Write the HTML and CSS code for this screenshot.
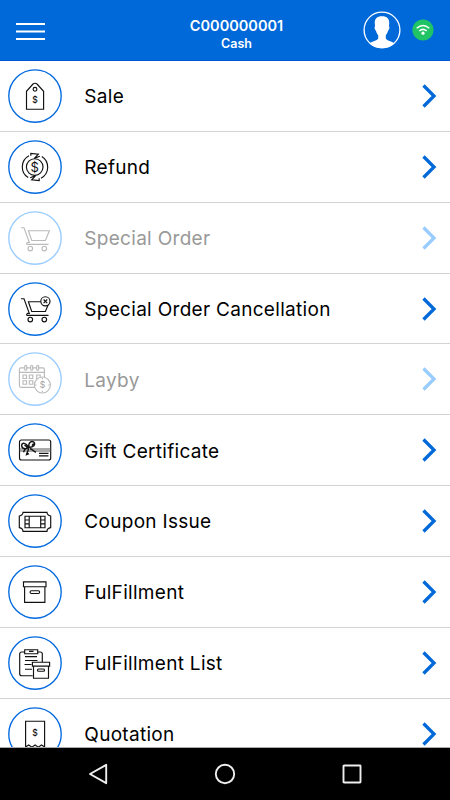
FILE: index.html
```html
<!DOCTYPE html>
<html lang="en">
<head>
<meta charset="utf-8">
<title>Menu</title>
<link rel="stylesheet" href="styles.css">
</head>
<body>
<svg class="defs" width="0" height="0">
  <symbol id="chevron" viewBox="0 0 16 26"><path d="M2.500 2.500 13 13 2.500 23.500" fill="none" stroke="currentColor" stroke-width="3.3"/></symbol>
  <symbol id="cart" viewBox="0 0 54 54"><path d="M13 16.7h3l5.3 14.6h-1.6q-1.7 1-.7 2.1h21.5M20.4 19.7h21l-4 9.8H23.7z"/><circle cx="22.3" cy="37.5" r="2.3"/><circle cx="36.3" cy="37.5" r="2.3"/></symbol>
</svg>
<div class="app">
  <header class="header">
    <svg class="burger" viewBox="0 0 29 20"><path d="M0 2h29M0 9.5h29M0 17h29" stroke="#fff" stroke-width="2"/></svg>
    <div class="title"><div class="code">C000000001</div><div class="mode">Cash</div></div>
    <div class="status">
      <svg class="avatar" viewBox="0 0 38 38"><circle cx="19" cy="19" r="17.9" fill="none" stroke="#fff" stroke-width="1.3"/><path d="M19 5.2c-5.200 0-7.600 2.600-7.200 7.500l.3 2.600c-1 .6-.4 3.800.8 4.200.5 2.300 1.300 3.600 2.300 4.700v3.300c-1.200 2.500-6 2.400-8.800 5A17.600 17.600 0 0 0 19 37a17.600 17.600 0 0 0 12.600-4.500c-2.800-2.600-7.600-2.500-8.800-5v-3.300c1-1.100 1.800-2.400 2.300-4.700 1.200-.4 1.800-3.600.8-4.200l.3-2.600c.4-4.900-2-7.500-7.200-7.500z" fill="#fff"/></svg>
      <svg class="wifi" viewBox="0 0 22 22"><circle cx="11" cy="11" r="10.6" fill="#20c464"/><g fill="none" stroke="#fff" stroke-width="1.5"><path d="M4.700 9.300q6.300-5.500 12.600 0M7.300 12q3.700-3.200 7.400 0"/></g><circle cx="11" cy="14.200" r="1.600" fill="#fff"/></svg>
    </div>
  </header>
  <main class="list">
    <div class="row"><svg class="icon" viewBox="0 0 54 54"><circle class="ring" cx="27" cy="27" r="26.2"/><path d="M18.5 40.2V22.3L25 15q2-1.5 4 0l6.6 7.3v17.9z"/><circle cx="27" cy="20.3" r="1.9"/><text x="27" y="33.500">$</text></svg><span class="label">Sale</span><svg class="chev"><use href="#chevron"/></svg></div>
    <div class="row"><svg class="icon" viewBox="0 0 54 54"><circle class="ring" cx="27" cy="27" r="26.2"/><circle cx="26.700" cy="27" r="8.3"/><path d="M21 15.8A12.6 12.6 0 0 0 20.2 37.6M33 38.2A12.6 12.6 0 0 0 33.8 16.4M22.8 15.700v-2.200l7.500.7-4 4.200 5.500-2.200M31.2 38.300v2.200l-7.500-.7 4-4.200-5.500 2.200"/><text class="large" x="26.700" y="31.600">$</text></svg><span class="label">Refund</span><svg class="chev"><use href="#chevron"/></svg></div>
    <div class="row off"><svg class="icon" viewBox="0 0 54 54"><circle class="ring" cx="27" cy="27" r="26.2"/><use href="#cart"/></svg><span class="label">Special Order</span><svg class="chev"><use href="#chevron"/></svg></div>
    <div class="row"><svg class="icon" viewBox="0 0 54 54"><circle class="ring" cx="27" cy="27" r="26.2"/><use href="#cart"/><circle class="cover" cx="37.4" cy="19.3" r="4.6"/><path d="m35.6 17.5 3.6 3.6m0-3.6-3.6 3.6"/></svg><span class="label">Special Order Cancellation</span><svg class="chev"><use href="#chevron"/></svg></div>
    <div class="row off"><svg class="icon" viewBox="0 0 54 54"><circle class="ring" cx="27" cy="27" r="26.2"/><rect x="11.4" y="15.8" width="25" height="19.5" rx="1.5"/><path d="M11.4 20.4h25M15 23h3.5v3.5H15zM21.3 23h3.5v3.5h-3.5zM28.7 23h3.5v3.5h-3.5zM15 28.7h3.5v3.5H15zM21.3 28.7h3.5v3.5h-3.5z"/><rect class="cover" x="16.7" y="13.2" width="2" height="5" rx="1"/><rect class="cover" x="22.7" y="13.2" width="2" height="5" rx="1"/><rect class="cover" x="28.7" y="13.2" width="2" height="5" rx="1"/><circle class="cover" cx="34.4" cy="33" r="8"/><path d="M34.4 25.7v1.5M34.4 38.8v1.5M27 33h1.5M40.2 33h1.5"/><text x="34.4" y="36.3">$</text></svg><span class="label">Layby</span><svg class="chev"><use href="#chevron"/></svg></div>
    <div class="row"><svg class="icon" viewBox="0 0 54 54"><circle class="ring" cx="27" cy="27" r="26.2"/><rect x="11.5" y="17" width="31.2" height="20" rx="2"/><path class="band" d="M11.500 26h31.200M11.500 28h31.200"/><path d="M31 30.300h9.500M31 32.800h9.500"/><path class="bow" d="M20.500 24.200c-2.500-4.500-6.500-5-6.800-2-.2 3.500 4 4.500 6.800 2zm.5 0c-1-4.500 2.500-7 5-5 2 3-1.500 5.500-5 5zm-1 .5c-1.500 0-3.500 2-4.500 4.500m5-4c0 3-1.500 4-2 6.500l2.500-1m1-5c2.500 0 3.500 3 6 3.500m-11.500-7 3 2m6-3.500-1.500 2"/></svg><span class="label">Gift Certificate</span><svg class="chev"><use href="#chevron"/></svg></div>
    <div class="row"><svg class="icon" viewBox="0 0 54 54"><circle class="ring" cx="27" cy="27" r="26.2"/><path d="M15 18.3h24q0 3 3.700 3.700v11.600q-3.700.6-3.700 3.700H15q0-3.100-3.700-3.700V22q3.700-.7 3.700-3.700zM17 22.200h20v11.500H17zM21.200 22.200v11.500M32.700 22.200v11.500M17 26h4.200M17 29.800h4.200M32.700 26H37M32.700 29.800H37"/></svg><span class="label">Coupon Issue</span><svg class="chev"><use href="#chevron"/></svg></div>
    <div class="row"><svg class="icon" viewBox="0 0 54 54"><circle class="ring" cx="27" cy="27" r="26.2"/><path d="M15.500 16.800h22.500v4.900H15.500zM16.600 21.700h20.300v15.700H16.600z"/><rect x="22.100" y="25.700" width="9.500" height="2.800" rx="1.200"/></svg><span class="label">FulFillment</span><svg class="chev"><use href="#chevron"/></svg></div>
    <div class="row"><svg class="icon" viewBox="0 0 54 54"><circle class="ring" cx="27" cy="27" r="26.2"/><path d="M16.700 16h-3q-2 0-2 2v19.700q0 2 2 2h11M29.700 16h2.600q2 0 2 2v8M17 20.600h12M17 24.500h12.500M16.500 28.500h7M17 33.200h7M16.700 13.700h13V17.700h-13zM21 15.300h4.500"/><path class="cover" d="M24.400 26.200h17.200v3.900H24.400zM25.500 30.100h15v12.100h-15z"/><rect x="29.500" y="33" width="7" height="2.200" rx="1"/></svg><span class="label">FulFillment List</span><svg class="chev"><use href="#chevron"/></svg></div>
    <div class="row"><svg class="icon" viewBox="0 0 54 54"><circle class="ring" cx="27" cy="27" r="26.2"/><path d="M17.600 40V14.200h19V40l-3.100-2-3.200 2.200-3.200-2.200-3.200 2.200-3.200-2.200z"/><text x="27" y="28.800">$</text></svg><span class="label">Quotation</span><svg class="chev"><use href="#chevron"/></svg></div>
  </main>
  <nav class="nav">
    <svg viewBox="0 0 24 24"><path d="M20.200 2.800v18.400L4 12z"/></svg>
    <svg viewBox="0 0 24 24"><circle cx="12" cy="12" r="9.200"/></svg>
    <svg viewBox="0 0 24 24"><rect x="3.500" y="3.500" width="17" height="17" rx=".5"/></svg>
  </nav>
</div>
</body>
</html>
```
FILE: styles.css
```css
* { box-sizing: border-box; }
body { margin: 0; font-family: Inter, sans-serif; background: #fff; color: #000; }
.defs { display: none; }
.app { width: 450px; height: 800px; display: flex; flex-direction: column; overflow: hidden; }
.header { flex: none; height: 61px; padding: 0 17px 0 16px; background: #0069d9; border-bottom: 1px solid #0055d4; color: #fff; display: grid; grid-template-columns: 80px 1fr 80px; align-items: center; }
.burger { width: 29px; height: 20px; margin-top: 3px; }
.title { text-align: center; padding-top: 7px; padding-left: 24px; }
.code { font-size: 14.5px; line-height: 19px; font-weight: 600; }
.mode { font-size: 12.5px; line-height: 17px; font-weight: 600; }
.status { display: flex; align-items: center; gap: 11px; margin-left: 9.5px; }
.avatar { width: 38px; height: 38px; flex: none; }
.wifi { width: 22px; height: 22px; flex: none; }
.list { flex: 1; min-height: 0; overflow: hidden; border-bottom: 1px solid #aaa; }
.row { height: 70.86px; padding: 0 13px 0 8px; border-bottom: 1px solid #d3d3d3; display: flex; align-items: center; }
.icon { width: 54px; height: 54px; flex: none; fill: none; stroke: #111; stroke-width: 1.15; }
.icon .ring { stroke: #0069e0; stroke-width: 1.35; }
.icon .cover { fill: #fff; }
.icon .bow { stroke-width: 1.4; }
.icon .band { stroke: #555; stroke-width: 1; }
.icon text { font: 500 8.5px Inter, sans-serif; fill: #111; stroke: none; text-anchor: middle; }
.icon .large { font-size: 13px; font-weight: 400; }
.label { flex: 1; margin-left: 22.3px; font-size: 19px; line-height: 26px; letter-spacing: 0.3px; padding-top: 2.8px; }
.chev { width: 16px; height: 26px; color: #0069d9; }
.off .icon { stroke: #bbb; }
.off .icon text { fill: #aaa; }
.off .icon .ring { stroke: #99ccff; }
.off .label { color: #999; }
.off .chev { color: #99ccff; }
.nav { flex: none; height: 52px; background: #000; display: flex; justify-content: space-between; align-items: center; padding: 0 86px; }
.nav svg { width: 24px; height: 24px; fill: none; stroke: #eee; stroke-width: 1.9; stroke-linejoin: round; }
```
